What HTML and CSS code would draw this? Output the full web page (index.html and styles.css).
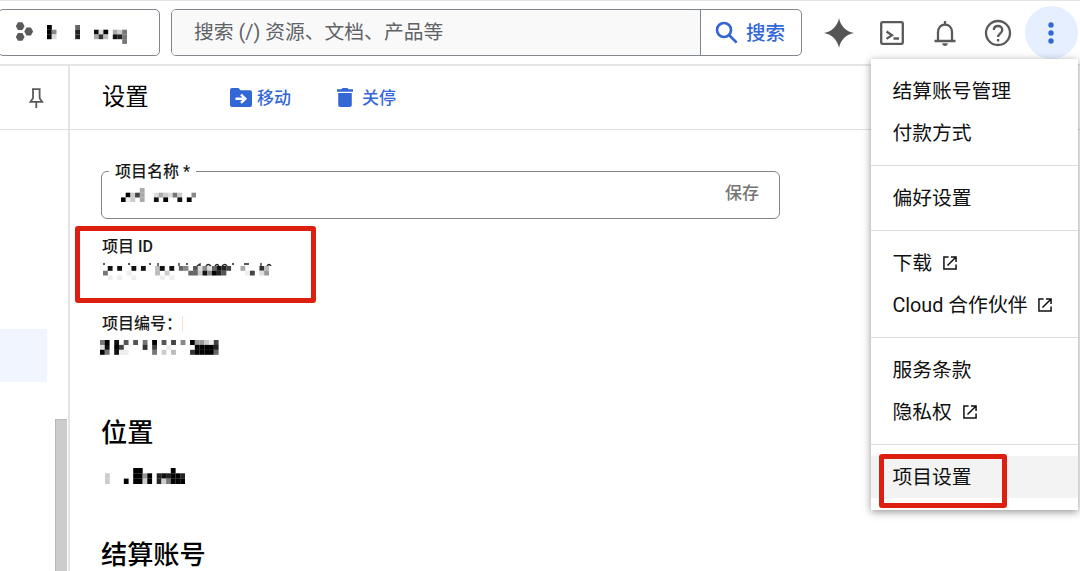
FILE: index.html
```html
<!DOCTYPE html>
<html lang="zh-CN">
<head>
    <meta charset="UTF-8">
    <meta name="viewport" content="width=device-width, initial-scale=1.0">
    <title>设置</title>
    <link rel="stylesheet" href="styles.css">
</head>
<body>

<header class="topbar">
    <button class="project-picker">
        <svg class="project-icon" viewBox="0 0 18 20"><path d="M3 0.3h4.4l2.2 3.9-2.2 3.9H3L0.8 4.2zM3 11h4.4l2.2 3.9-2.2 3.9H3L0.8 14.9zM11.5 5.6h4.4l2.2 3.9-2.2 3.9h-4.4l-2.2-3.9z"/></svg>
        <svg class="mosaic" data-cell="4.7 4.7" data-rows="0.....6.......... 08....2...1d0.ac7 0d....2..fa3b.127 ................7"></svg>
    </button>
    <div class="search">
        <div class="search-input">搜索 (/) 资源、文档、产品等</div>
        <button class="search-button">
            <svg viewBox="0 0 24 24"><circle cx="9.4" cy="9.4" r="7.3"/><path d="M14.6 14.6l8 8"/></svg>
            <span>搜索</span>
        </button>
    </div>
    <nav class="tools">
        <button><svg class="spark" viewBox="0 0 30 30"><path d="M15 0C16.5 8 22 13.5 30 15 22 16.5 16.5 22 15 30 13.5 22 8 16.5 0 15 8 13.5 13.5 8 15 0z"/></svg></button>
        <button><svg class="line" viewBox="0 0 30 30"><rect x="4.2" y="4.2" width="21.6" height="21.6" rx="1.5"/><path d="M9.5 13.5l5.5 3.7-5.5 3.7M16.5 20.5h5.5"/></svg></button>
        <button><svg class="line" viewBox="0 0 30 30"><path d="M4.5 23h21M8 23v-8.5c0-4.7 2.8-8 7-8s7 3.3 7 8V23M15 6.5V3"/><path class="solid" d="M12.2 25.3h5.6c0 1.6-1.2 2.7-2.8 2.7s-2.8-1.1-2.8-2.7z"/></svg></button>
        <button><svg class="line" viewBox="0 0 30 30"><circle cx="15" cy="15" r="12"/><path d="M10.8 12.1c0-2.5 1.8-4.1 4.3-4.1 2.4 0 4.2 1.6 4.2 3.9 0 3.2-4.2 3.6-4.2 7M15.1 21v2.5"/></svg></button>
        <button class="more"><svg viewBox="0 0 30 30"><circle cx="15" cy="7" r="2.7"/><circle cx="15" cy="15" r="2.7"/><circle cx="15" cy="23" r="2.7"/></svg></button>
    </nav>
</header>

<div class="layout">
    <aside class="rail">
        <div class="rail-head">
            <svg viewBox="0 0 16 22"><path d="M4 2.2h8.6M5 2v9.2l-2.6 3.6h11.8l-2.6-3.6V2M8.3 14.8V21"/></svg>
        </div>
        <div class="rail-active"></div>
        <div class="scrollbar"></div>
    </aside>

    <main class="page">
        <div class="page-head">
            <h1>设置</h1>
            <button class="action">
                <svg class="folder" viewBox="0 0 22 19"><path class="fill" d="M2 0h6.5l2 2.3H20a2 2 0 0 1 2 2V17a2 2 0 0 1-2 2H2a2 2 0 0 1-2-2V2a2 2 0 0 1 2-2z"/><path class="arrow" d="M5.5 10.7h9M11 6.5l4.3 4.2-4.3 4.2"/></svg>
                移动
            </button>
            <button class="action shutdown">
                <svg class="trash" viewBox="0 0 16 19"><path class="fill" d="M0 1.2h4.5L5.5 0h5l1 1.2H16v2.6H0zM1.2 5h13.6v12a2 2 0 0 1-2 2H3.2a2 2 0 0 1-2-2z"/></svg>
                关停
            </button>
        </div>

        <div class="content">
            <fieldset class="name-field">
                <legend>项目名称 *</legend>
                <div class="name-row">
                    <svg class="mosaic" data-cell="4.7 4.7" data-rows="....a........... .0c4a..dacd7c..8 0ec.a..1.0..1.0."></svg>
                    <span class="save">保存</span>
                </div>
            </fieldset>

            <section class="id-box">
                <div class="label">项目 ID</div>
                <svg class="id-tops" viewBox="0 0 172 3"><path d="M0 1h2M25 1h2M46 1h2M55 0v3M76 0v3M83 1h2M94 3l3-2v2M103 3q2-3 5 0M112 3q2-3 4 0M119 3q3-3 5 0M129 1h2M141 1h5M158 0v3M164 3q2-3 4 0"/></svg>
                <svg class="mosaic" data-cell="4.74 4.7" data-rows=".1.1..1.1..b1.1.68.5d8d6124..a...3b. 7....e.....b.c....66c18025....e4.d9 .e.e..e.....e.e..f.................."></svg>
            </section>

            <section class="number">
                <div class="label">项目编号：<i class="caret"></i></div>
                <svg class="mosaic" data-cell="4.74 4.9" data-rows="70.1.5.5.7.0.5.4.8.099ce4 d1.04....3.4..e.....00002 07.1ee.....7.c.b...300006"></svg>
            </section>

            <section class="location">
                <h2>位置</h2>
                <svg class="mosaic" data-cell="4.7 5.3" data-rows="......00......0.. c.....0090.212002 c...0.00c0.2c7000"></svg>
            </section>

            <h2>结算账号</h2>
        </div>
    </main>
</div>

<div class="menu">
    <div class="group">
        <a>结算账号管理</a>
        <a>付款方式</a>
    </div>
    <div class="group">
        <a>偏好设置</a>
    </div>
    <div class="group">
        <a>下载 <svg class="ext" viewBox="0 0 15 15"><path d="M6 1H1v13h13V9M8.5 1H14v5.5M14 1L4.8 10.2"/></svg></a>
        <a>Cloud 合作伙伴 <svg class="ext" viewBox="0 0 15 15"><path d="M6 1H1v13h13V9M8.5 1H14v5.5M14 1L4.8 10.2"/></svg></a>
    </div>
    <div class="group">
        <a>服务条款</a>
        <a>隐私权 <svg class="ext" viewBox="0 0 15 15"><path d="M6 1H1v13h13V9M8.5 1H14v5.5M14 1L4.8 10.2"/></svg></a>
    </div>
    <div class="group">
        <a class="current">项目设置</a>
    </div>
    <div class="mark"></div>
</div>

<script src="script.js"></script>
</body>
</html>
```
FILE: styles.css
```css
* {
    margin: 0;
    padding: 0;
    box-sizing: border-box;
}

body {
    width: 1080px;
    height: 571px;
    overflow: hidden;
    position: relative;
    background-color: #fff;
    color: #1a1a1a;
    font-family: Roboto, "Noto Sans CJK SC", sans-serif;
}

button {
    border: none;
    background: none;
    font: inherit;
    color: inherit;
}

svg {
    display: block;
    flex: none;
}

.topbar {
    display: flex;
    height: 66px;
    padding-top: 8px;
    border-top: 1px solid #e4e4e4;
    border-bottom: 2px solid #e6e6e6;
}

.project-picker {
    display: flex;
    align-items: flex-start;
    width: 162px;
    height: 47px;
    margin-left: -2px;
    padding: 12px 0 0 16px;
    border: 1px solid #80868b;
    border-radius: 5px;
}

.project-icon {
    width: 18px;
    height: 20px;
    fill: #5a5a5a;
}

.project-picker .mosaic {
    margin: 3px 0 0 14px;
}

.search {
    display: flex;
    width: 631px;
    height: 47px;
    margin-left: 11px;
    border: 1px solid #80868b;
    border-radius: 5px;
    overflow: hidden;
}

.search-input {
    flex: 1;
    padding-left: 22px;
    line-height: 45px;
    font-size: 19.8px;
    color: #5f6368;
    background-color: #f9f9f9;
}

.search-button {
    display: flex;
    align-items: center;
    width: 101px;
    padding: 0 0 1px 14px;
    border-left: 1px solid #80868b;
    font-size: 19.5px;
    font-weight: 500;
    color: #3367d6;
}

.search-button span {
    padding-bottom: 1px;
}

.search-button svg {
    width: 23px;
    height: 23px;
    margin-right: 8px;
    fill: none;
    stroke: #3367d6;
    stroke-width: 2.8;
}

.tools {
    display: flex;
    margin: -3px 0 0 10.5px;
}

.tools button {
    display: flex;
    align-items: center;
    justify-content: center;
    width: 53px;
    height: 53px;
}

.tools svg {
    width: 30px;
    height: 30px;
}

.spark {
    fill: #555;
}

.line {
    fill: none;
    stroke: #5a5a5a;
    stroke-width: 2.3;
}

.line .solid {
    fill: #5a5a5a;
    stroke: none;
}

.tools .more {
    border-radius: 50%;
    background-color: #e5efff;
}

.more svg {
    fill: #3367d6;
}

.layout {
    display: flex;
    height: 505px;
}

.rail {
    display: flex;
    flex-direction: column;
    width: 70px;
    border-right: 2px solid #e4e4e4;
}

.rail-head {
    height: 64px;
    padding: 21px 0 0 28px;
    border-bottom: 1px solid #e0e0e0;
}

.rail-head svg {
    width: 16px;
    height: 22px;
    fill: none;
    stroke: #5a5a5a;
    stroke-width: 1.8;
}

.rail-active {
    width: 47px;
    height: 53px;
    margin-top: 199px;
    background-color: #f0f5ff;
}

.scrollbar {
    width: 12px;
    flex: 1;
    margin: 37px 1px 0 auto;
    background-color: #ccc;
    border-top: 1px solid #bbb;
    border-left: 1px solid #b8b8b8;
}

.page {
    flex: 1;
}

.page-head {
    display: flex;
    align-items: center;
    height: 64px;
    padding: 0 0 2px 32px;
    border-bottom: 1px solid #e0e0e0;
}

h1 {
    width: 128px;
    padding-bottom: 3px;
    font-size: 23.3px;
    font-weight: 400;
    color: #000;
}

.action {
    display: flex;
    align-items: center;
    gap: 5px;
    font-size: 17px;
    font-weight: 500;
    color: #3367d6;
}

.action svg {
    margin-top: 1px;
}

.shutdown {
    gap: 9px;
    margin-left: 46px;
}

.folder {
    width: 22px;
    height: 19px;
}

.trash {
    width: 16px;
    height: 19px;
}

.fill {
    fill: #3367d6;
}

.arrow {
    fill: none;
    stroke: #fff;
    stroke-width: 2.4;
}

.content {
    padding: 30px 0 0 31px;
}

.name-field {
    width: 679px;
    height: 59px;
    padding-left: 19px;
    border: 1px solid #80868b;
    border-radius: 6px;
}

/* line box sits a bit low so the text centres on the border */
.name-field legend {
    height: 22px;
    margin-left: -12px;
    padding: 0 6px;
    line-height: 23px;
    font-size: 16px;
    font-weight: 500;
}

.name-row {
    display: flex;
    justify-content: space-between;
    padding: 6px 20px 0 0;
}

.save {
    margin-top: -7px;
    line-height: 24px;
    font-size: 17px;
    font-weight: 500;
    color: #757575;
}

.label {
    height: 24px;
    line-height: 24px;
    font-size: 16px;
    font-weight: 500;
}

.id-box {
    width: 241px;
    height: 77px;
    margin: 7px 0 0 -26px;
    padding: 4px 0 0 22px;
    border: 5px solid #dc1f0e;
    border-radius: 3px;
}

.id-box .mosaic {
    margin-left: 1px;
}

.id-tops {
    width: 172px;
    height: 3px;
    margin: 4px 0 0 1px;
    fill: none;
    stroke: #222;
    stroke-width: 1.3;
}

.number {
    height: 111px;
    padding-top: 9px;
}

.number .label {
    display: flex;
    align-items: center;
    padding-left: 1px;
}

.caret {
    width: 1px;
    height: 16px;
    background-color: #ffe0d0;
}

.number .mosaic {
    margin: 4px 0 0 -1px;
}

h2 {
    height: 38px;
    line-height: 38px;
    font-size: 26.2px;
    font-weight: 500;
    color: #000;
}

.location {
    height: 122px;
}

.location .mosaic {
    margin: 16px 0 0 4px;
}

/* overflow menu */
.menu {
    position: absolute;
    top: 59px;
    left: 871px;
    width: 207px;
    height: 451px;
    background-color: #fff;
    box-shadow: 0 2px 8px rgba(0, 0, 0, 0.42);
    font-size: 19.8px;
    color: #111;
}

.group {
    padding: 10.6px 0;
    border-bottom: 1px solid #dedede;
}

.group:nth-child(5) {
    border-bottom: none;
}

.group a {
    display: flex;
    align-items: center;
    height: 42.5px;
    padding: 0 0 3px 21.4px;
    white-space: pre;
}

.group .current {
    background-color: #f3f3f3;
}

.ext {
    width: 14px;
    height: 14px;
    margin: 3px 0 0 6px;
    fill: none;
    stroke: #111;
    stroke-width: 1.6;
}

.mark {
    position: absolute;
    top: 395px;
    left: 8px;
    width: 128px;
    height: 54px;
    border: 5px solid #dc1f0e;
    border-radius: 3px;
}
```
FILE: script.js
```js
// each character is a grey level 0-f, a dot is an empty cell
document.querySelectorAll('.mosaic').forEach(function (svg) {
    const rows = svg.dataset.rows.split(' ');
    const [w, h] = svg.dataset.cell.split(' ').map(Number);
    svg.setAttribute('width', rows[0].length * w);
    svg.setAttribute('height', rows.length * h);

    rows.forEach(function (row, y) {
        [...row].forEach(function (level, x) {
            if (level === '.') return;
            const rect = document.createElementNS('http://www.w3.org/2000/svg', 'rect');
            rect.setAttribute('x', x * w);
            rect.setAttribute('y', y * h);
            rect.setAttribute('width', w + 0.1);
            rect.setAttribute('height', h + 0.1);
            rect.setAttribute('fill', '#' + level.repeat(3));
            svg.appendChild(rect);
        });
    });
});
```
